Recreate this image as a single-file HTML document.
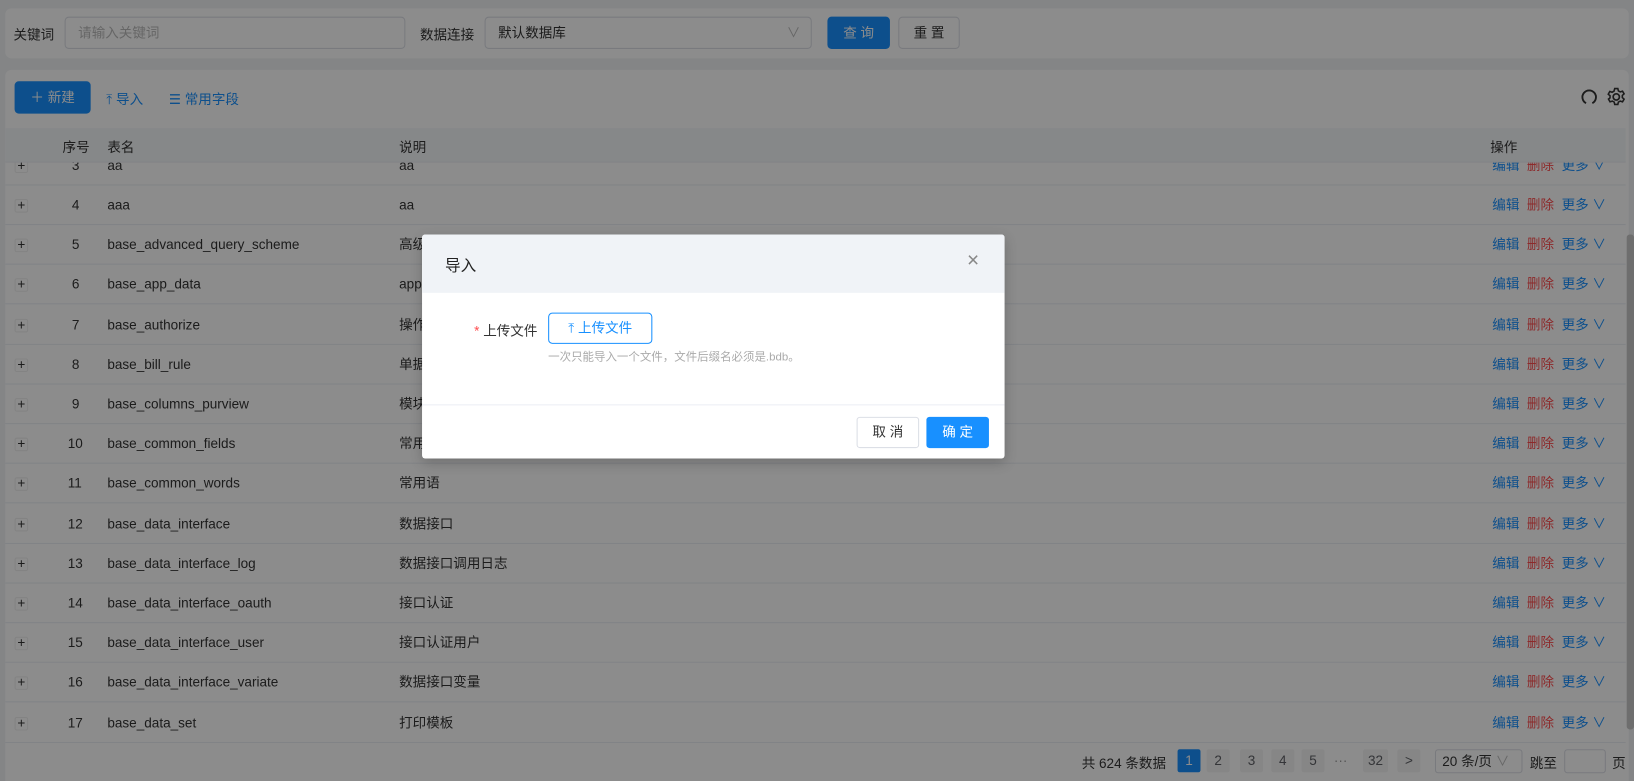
<!DOCTYPE html>
<html><head><meta charset="utf-8"><style>
*{box-sizing:border-box;margin:0;padding:0}
html{width:1634px;height:781px;overflow:hidden;background:#f0f2f5}
body{width:1634px;height:781px;overflow:hidden;background:#f0f2f5;font-family:"Liberation Sans","Noto Sans CJK SC",sans-serif;font-size:13px;color:#333;position:relative}
#wrap{position:absolute;left:0;top:0;width:1568px;height:750px;transform:scale(1.04209);transform-origin:0 0}
.abs{position:absolute}
.panel{position:absolute;background:#fff;border-radius:6px}
.inp{position:absolute;border:1px solid #dcdfe6;border-radius:4px;height:31px;line-height:29px;padding-left:12px;color:#333}
.row{position:absolute;left:5px;width:1555px;height:38px;border-bottom:1px solid #ebeef5}
.row span{position:absolute;top:0;line-height:38px}
.plus{position:absolute;left:9px;top:13px;width:13px;height:13px;border:1px solid #eee;border-radius:2px;font-size:13px;line-height:10px;text-align:center;color:#333}
.blue{color:#1890ff}.red{color:#ff4d4f}
.pg{position:absolute;top:719px;height:22px;min-width:22px;line-height:22px;text-align:center;background:#f4f4f5;border-radius:2px;color:#606266;font-size:13px}
#ov{position:fixed;left:0;top:0;right:0;bottom:0;width:1634px;height:781px;background:rgba(0,0,0,.45)}
</style></head><body>
<div id="wrap">
<div class="panel" style="left:5px;top:8px;width:1558px;height:48px"></div>
<div class="abs" style="left:13px;top:23px">关键词</div>
<div class="inp" style="left:62px;top:16px;width:327px;color:#bbb">请输入关键词</div>
<div class="abs" style="left:403px;top:23px">数据连接</div>
<div class="inp" style="left:465px;top:16px;width:314px">默认数据库<span style="position:absolute;right:10px;color:#bbb">∨</span></div>
<div class="abs" style="left:794px;top:16px;width:60px;height:31px;background:#1890ff;color:#fff;border-radius:4px;text-align:center;line-height:31px">查 询</div>
<div class="abs" style="left:862px;top:16px;width:59px;height:31px;border:1px solid #dcdfe6;border-radius:4px;text-align:center;line-height:29px">重 置</div>

<div class="panel" style="left:5px;top:67px;width:1558px;height:700px"></div>
<div class="abs" style="left:14px;top:78px;width:73px;height:31px;background:#1890ff;color:#fff;border-radius:4px;text-align:center;line-height:31px">＋ 新建</div>
<div class="abs blue" style="left:102px;top:85px">⤒ 导入</div>
<div class="abs blue" style="left:162px;top:85px">☰ 常用字段</div>
<svg class="abs" style="left:1516px;top:84px" width="18" height="18" viewBox="0 0 18 18"><path d="M6 15A6.5 6.5 0 1 1 12 15" fill="none" stroke="#333" stroke-width="1.8"/></svg>
<svg class="abs" style="left:1541px;top:83px" width="20" height="20" viewBox="0 0 20 20"><circle cx="10" cy="10" r="3" fill="none" stroke="#333" stroke-width="1.6"/><path d="M8.5 2h3l.5 2.2 1.8 1 2.2-.7 1.5 2.6-1.7 1.5v2l1.7 1.5-1.5 2.6-2.2-.7-1.8 1-.5 2.2h-3l-.5-2.2-1.8-1-2.2.7-1.5-2.6L4 10.9v-2L2.3 7.4l1.5-2.6 2.2.7 1.8-1z" fill="none" stroke="#333" stroke-width="1.5"/></svg>

<div class="row" style="top:140px"><div class="plus">+</div><span style="left:64px">3</span><span style="left:98px">aa</span><span style="left:378px">aa</span><span style="left:1427px"><b class="blue" style="font-weight:normal">编辑</b>&nbsp;&nbsp;<b class="red" style="font-weight:normal">删除</b>&nbsp;&nbsp;<b class="blue" style="font-weight:normal">更多 ∨</b></span></div>
<div class="abs" style="left:5px;top:123px;width:1555px;height:33px;background:#f5f7fa;border-bottom:1px solid #ebeef5"><span class="abs" style="left:55px;top:8px">序号</span><span class="abs" style="left:98px;top:8px">表名</span><span class="abs" style="left:378px;top:8px">说明</span><span class="abs" style="left:1425px;top:8px">操作</span></div>

<div id="rows"></div>
<script>
var d=[[4,"aaa","aa"],[5,"base_advanced_query_scheme","高级查询方案"],[6,"base_app_data","app"],[7,"base_authorize","操作"],[8,"base_bill_rule","单据"],[9,"base_columns_purview","模块"],[10,"base_common_fields","常用"],[11,"base_common_words","常用语"],[12,"base_data_interface","数据接口"],[13,"base_data_interface_log","数据接口调用日志"],[14,"base_data_interface_oauth","接口认证"],[15,"base_data_interface_user","接口认证用户"],[16,"base_data_interface_variate","数据接口变量"],[17,"base_data_set","打印模板"]];
var h="";d.forEach(function(r,i){var t=178+i*38.2;h+='<div class="row" style="top:'+t+'px"><div class="plus">+</div><span style="left:'+(r[0]<10?64:60)+'px">'+r[0]+'</span><span style="left:98px">'+r[1]+'</span><span style="left:378px">'+r[2]+'</span><span style="left:1427px"><i class="blue" style="font-style:normal">编辑</i>&nbsp;&nbsp;<i class="red" style="font-style:normal">删除</i>&nbsp;&nbsp;<i class="blue" style="font-style:normal">更多 ∨</i></span></div>'});
document.getElementById("rows").innerHTML=h;
</script>
<div class="abs" style="left:1561px;top:225px;width:7px;height:475px;background:#c8c8c8;border-radius:3px"></div>

<div class="abs" style="left:1038px;top:722px">共 624 条数据</div>
<div class="pg" style="left:1130px;background:#1890ff;color:#fff">1</div>
<div class="pg" style="left:1158px">2</div>
<div class="pg" style="left:1190px">3</div>
<div class="pg" style="left:1220px">4</div>
<div class="pg" style="left:1249px">5</div>
<div class="abs" style="left:1280px;top:722px;color:#999">···</div>
<div class="pg" style="left:1308px;width:24px">32</div>
<div class="pg" style="left:1341px">&gt;</div>
<div class="abs" style="left:1377px;top:719px;width:84px;height:23px;border:1px solid #dcdfe6;border-radius:3px;line-height:21px;padding-left:6px">20 条/页 <span style="color:#bbb">∨</span></div>
<div class="abs" style="left:1468px;top:722px">跳至</div>
<div class="abs" style="left:1501px;top:719px;width:40px;height:23px;border:1px solid #dcdfe6;border-radius:3px"></div>
<div class="abs" style="left:1547px;top:722px">页</div>
</div>

<div id="ov"></div>
<div style="position:absolute;left:0;top:0;width:1568px;height:750px;transform:scale(1.04209);transform-origin:0 0">
<div class="abs" style="left:405px;top:225px;width:559px;height:215px;background:#fff;border-radius:3px;overflow:hidden;box-shadow:0 4px 12px rgba(0,0,0,.2)">
 <div style="height:56px;background:#f0f3f7;position:relative"><span class="abs" style="left:22px;top:19px;font-size:15px;color:#222">导入</span><span class="abs" style="left:523px;top:14px;font-size:20px;color:#888">×</span></div>
 <div class="abs" style="left:50px;top:82px;font-size:13px"><span class="red">*</span> 上传文件</div>
 <div class="abs" style="left:121px;top:75px;width:100px;height:30px;border:1px solid #1890ff;border-radius:4px;color:#1890ff;text-align:center;line-height:28px">⤒ 上传文件</div>
 <div class="abs" style="left:121px;top:109px;font-size:11px;color:#aaa">一次只能导入一个文件，文件后缀名必须是.bdb。</div>
 <div class="abs" style="left:0;top:163px;width:559px;border-top:1px solid #ebeef5"></div>
 <div class="abs" style="left:417px;top:175px;width:60px;height:30px;border:1px solid #dcdfe6;border-radius:3px;text-align:center;line-height:28px">取 消</div>
 <div class="abs" style="left:484px;top:175px;width:60px;height:30px;background:#1890ff;color:#fff;border-radius:3px;text-align:center;line-height:30px">确 定</div>
</div>
</div>
</body></html>
